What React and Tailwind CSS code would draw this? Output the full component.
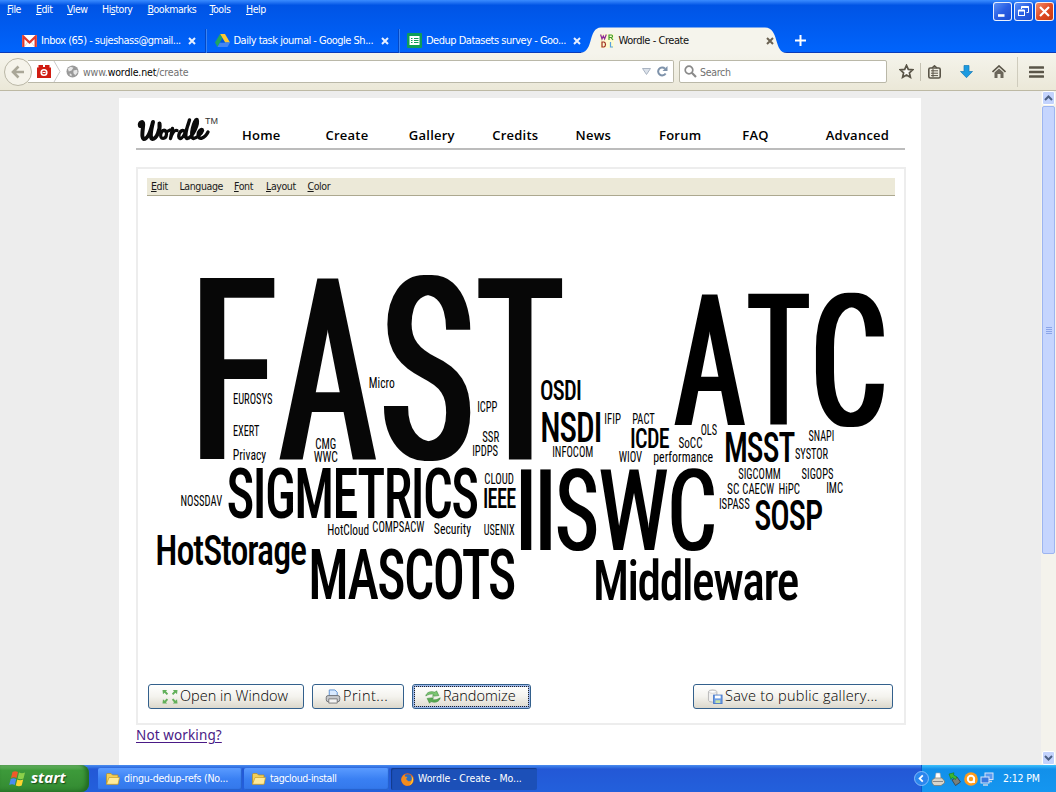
import React from "react";

const CLOUD_FONT = '"Roboto", "Liberation Sans", sans-serif';
const CAP = 0.711;

// [text, left, right, baseline, cap height]
const WORDS = [
  ["EUROSYS", 233.7, 272, 404, 10.4],
  ["EXERT", 233.7, 259, 436, 10.4],
  ["Privacy", 233.7, 266, 460, 10.4],
  ["CMG", 316, 335.6, 449.2, 10.4],
  ["WWC", 314, 337.5, 462.3, 10.4],
  ["Micro", 369.7, 394.2, 388.3, 10.4],
  ["ICPP", 478, 497, 412.3, 10.4],
  ["SSR", 482.7, 499, 441.8, 10.4],
  ["IPDPS", 473, 497.7, 455.6, 10.4],
  ["OSDI", 541, 580.3, 400, 19.6],
  ["NSDI", 542.3, 600, 441.5, 29.6],
  ["INFOCOM", 553, 592.5, 456.8, 10.4],
  ["IFIP", 605.2, 620.5, 424.4, 10.4],
  ["PACT", 633, 654.5, 424.4, 10.4],
  ["ICDE", 631.5, 669, 448, 19.8],
  ["OLS", 701.3, 716.7, 434.8, 10.4],
  ["SoCC", 679, 702, 448, 10.4],
  ["WIOV", 619, 642, 461.9, 10.4],
  ["performance", 654, 712.5, 461.9, 10.4],
  ["MSST", 726, 794.5, 461.7, 30],
  ["SNAPI", 809, 833.5, 441, 10.4],
  ["SYSTOR", 795.3, 828, 459, 10.4],
  ["SIGMETRICS", 228.3, 477.3, 517.7, 49.7],
  ["NOSSDAV", 181.3, 222, 506, 10.4],
  ["CLOUD", 485, 513.3, 484, 10.4],
  ["IEEE", 484.3, 515.8, 508.3, 19.6],
  ["HotCloud", 328, 368.5, 535.3, 10.4],
  ["COMPSACW", 373, 424.2, 532.3, 10.4],
  ["Security", 434.3, 471, 533.7, 10.4],
  ["USENIX", 484.4, 514.2, 535.3, 10.4],
  ["HotStorage", 157.7, 306, 565.4, 29.7],
  ["MASCOTS", 311.7, 514.5, 599.4, 50],
  ["Middleware", 596, 798, 600, 40],
  ["SIGCOMM", 738.7, 780, 479.4, 10.4],
  ["SIGOPS", 802, 833, 479.4, 10.4],
  ["SC", 727.5, 738.8, 493.7, 10.4],
  ["CAECW", 743, 774, 493.7, 10.4],
  ["HiPC", 779.3, 799.6, 493.5, 10.4],
  ["IMC", 827, 842.6, 493.3, 10.4],
  ["ISPASS", 719.8, 749.3, 508.7, 10.4],
  ["SOSP", 755.3, 822, 530.4, 30],
];

const BIG = [
  { base: 459.3, cap: 180.6, fill: "#070707", grow: 4, weight: 400, parts: [["F", 200, 275], ["A", 279.3, 376.7], ["S", 383.7, 470.7], ["T", 477.7, 562.7]] },
  { base: 424.7, cap: 130.4, fill: "#000", grow: 3, weight: 400, parts: [["A", 674.3, 745.3], ["T", 747.7, 809.3], ["C", 815.7, 884.2]] },
  { base: 550, cap: 80, fill: "#000", grow: 1, weight: 400, parts: [["I", 521, 531.8], ["I", 540.3, 551.2], ["S", 557.5, 596.3], ["W", 600, 667.5], ["C", 671.5, 714.2]] },
];

const ctx = document.createElement("canvas").getContext("2d");

// Places a run so that its ink spans exactly from left to right.
function fit(text, left, right, weight, tight) {
  ctx.font = `${weight} 200px ${CLOUD_FONT}`;
  try {
    ctx.fontStretch = "condensed";
    ctx.letterSpacing = tight ? "-6px" : "0px";
  } catch (e) { /* older engines */ }
  const m = ctx.measureText(text);
  const inkL = -m.actualBoundingBoxLeft;
  const k = (right - left) / (m.actualBoundingBoxRight - inkL);
  return { x: left - inkL * k, textLength: m.width * k };
}

function CloudText({ parts, base, cap, weight, fill, grow = 0, tight }) {
  return (
    <text
      y={base}
      fontSize={cap / CAP}
      fontWeight={weight}
      fill={fill}
      filter={grow ? `url(#grow${grow})` : undefined}
      style={{ fontStretch: "75%", letterSpacing: tight ? "-0.03em" : undefined }}
    >
      {parts.map(([t, l, r], i) => (
        <tspan key={i} lengthAdjust="spacingAndGlyphs" {...fit(t, l + grow, r - grow, weight, tight)}>{t}</tspan>
      ))}
    </text>
  );
}

const weightFor = (cap) => (cap < 15 ? 400 : 500);

function Cloud() {
  return (
    <svg className="block h-[480px] w-[748px] overflow-visible" viewBox="147 196 748 480" fontFamily={CLOUD_FONT}>
      <defs>
        {[1, 3, 4].map((n) => (
          <filter key={n} id={`grow${n}`} filterUnits="userSpaceOnUse" colorInterpolationFilters="sRGB" x="147" y="196" width="748" height="480">
            <feMorphology operator="dilate" radius={`${n} 0`} />
          </filter>
        ))}
      </defs>
      {BIG.map((w, i) => <CloudText key={i} {...w} />)}
      {WORDS.map(([t, l, r, b, c]) => (
        <CloudText key={t} parts={[[t, l, r]]} base={b} cap={c} weight={weightFor(c)} tight={c > 15} fill="#000" />
      ))}
    </svg>
  );
}

const U = ({ children }) => <span className="underline underline-offset-1">{children}</span>;

function Close({ dark }) {
  return (
    <svg className="h-[8px] w-[8px] shrink-0" viewBox="0 0 8 8">
      <path d="M1 1L7 7M7 1L1 7" stroke={dark ? "#6b6252" : "#e6efff"} strokeWidth="2" />
    </svg>
  );
}

const Gmail = () => (
  <svg className="h-[12px] w-[15px]" viewBox="0 0 15 12"><rect width="15" height="12" rx="1" fill="#fff" /><path d="M3 11L6 6.500M12 11L9 6.500" stroke="#ddd" /><path d="M1.300 12V1.500L7.500 7.500L13.700 1.500V12" fill="none" stroke="#e0392d" strokeWidth="2.300" /></svg>
);
const Drive = () => (
  <svg className="h-[13px] w-[15px]" viewBox="0 0 15 13"><path d="M5 0H10L15 8.500H10Z" fill="#fbc830" /><path d="M5 0L7.500 4.300L2.500 13L0 8.500Z" fill="#1fa463" /><path d="M5 8.500H15L12.500 13H2.500Z" fill="#4385f4" /><path d="M5 8.500H10L7.500 4.300Z" fill="#0358d8" /></svg>
);
const Sheets = () => (
  <svg className="h-[15px] w-[15px]" viewBox="0 0 15 15"><rect width="15" height="15" rx="1" fill="#0f9d58" /><rect x="2.500" y="3" width="10" height="9" fill="#fff" /><path d="M4 5.500H5.500M7 5.500H11.500M4 7.500H5.500M7 7.500H11.500M4 9.500H5.500M7 9.500H11.500" stroke="#0f9d58" /></svg>
);
const WordleIcon = () => (
  <svg className="h-[14px] w-[14px]" viewBox="0 0 14 14">
    <rect width="14" height="14" fill="#fdfbd0" />
    <g fill="none" strokeWidth="1.200"><path d="M.6 .5L2 5L3.300 2L4.600 5L6.300 .5" stroke="#8a2a9a" /><path d="M9 6V1H11.500Q12.500 1 12.500 2.200T11.500 3.500H9M11 3.500L13 6" stroke="#3f9a2a" /><path d="M2 8V13H4Q5.500 12.500 5.500 10.500T4 8Z" stroke="#a03020" /><path d="M10.500 8V13H13" stroke="#58a0e0" /></g>
  </svg>
);

function Tab({ icon, label, sep = true }) {
  return (
    <div className="flex h-[27px] w-[192.500px] shrink-0 items-center text-white">
      <span className="flex w-[15px] shrink-0 justify-center">{icon}</span>
      <span className="ml-[4px] w-[147px] text-[11px] leading-[15px] tracking-[-0.500px] whitespace-nowrap">{label}</span>
      <Close />
      {sep && <span className="ml-[10px] h-[24px] w-px bg-[#3b84f2] shadow-[-1px_0_0_#0448c4]" />}
    </div>
  );
}

function WinButton({ kind }) {
  return (
    <span className={"flex h-[19px] w-[19px] items-center justify-center rounded-[3px] border border-white/90 " + (kind === "x" ? "bg-linear-to-br from-[#f08a68] via-[#e04a22] to-[#c83a10]" : "bg-linear-to-br from-[#5b8ff5] via-[#2a5fe4] to-[#1c4cd0]")}>
      <svg className="h-[15px] w-[15px]" viewBox="0 0 15 15" fill="none" stroke="#fff">
        {kind === "min" && <path d="M3 11.500H9.500" strokeWidth="2.600" />}
        {kind === "max" && <g><path d="M5.500 5V2.500H12.500V8.500H10.500" /><path d="M5.500 3H12.500" strokeWidth="2" /><rect x="2.500" y="6.500" width="6" height="5" /><path d="M2.500 6.500H8.500" strokeWidth="2" /></g>}
        {kind === "x" && <path d="M3 3L12 12M12 3L3 12" strokeWidth="2.200" />}
      </svg>
    </span>
  );
}

function TitleBar() {
  return (
    <header className="flex h-[53px] shrink-0 flex-col border-b border-[#0a3ab8] bg-linear-to-b from-[#3a8cff] from-0% via-[#0054e5] via-10% to-[#0064fc] text-white">
      <div className="flex h-[26px] shrink-0 justify-between">
        <nav className="flex pt-[2px] pl-[7px] text-[10.500px] leading-[15px] tracking-[-0.450px]">
          <span className="w-[29px]"><U>F</U>ile</span>
          <span className="w-[31px]"><U>E</U>dit</span>
          <span className="w-[35px]"><U>V</U>iew</span>
          <span className="w-[45.500px]">Hi<U>s</U>tory</span>
          <span className="w-[62px]"><U>B</U>ookmarks</span>
          <span className="w-[36.500px]"><U>T</U>ools</span>
          <span><U>H</U>elp</span>
        </nav>
        <div className="flex gap-[2px] pt-[2px] pr-[2px]"><WinButton kind="min" /><WinButton kind="max" /><WinButton kind="x" /></div>
      </div>
      <div className="flex h-[27px] shrink-0 pt-px pl-[22px]">
        <Tab icon={<Gmail />} label="Inbox (65) - sujeshass@gmail..." />
        <Tab icon={<Drive />} label="Daily task journal - Google Sh..." />
        <Tab icon={<Sheets />} label="Dedup Datasets survey - Goo..." sep={false} />
        <div className="relative ml-[-19px] flex h-[27px] w-[212px] shrink-0 items-center pl-[19px] text-[#111]">
          <svg className="absolute top-0 left-0 h-[26px] w-[212px]" viewBox="0 0 212 26"><path d="M-2 26C14 26 6 1 20 .5H184C199 1 192 26 206 26Z" fill="#f5f4ec" /></svg>
          <span className="relative"><WordleIcon /></span>
          <span className="relative ml-[5px] w-[147px] text-[11px] leading-[15px] tracking-[-0.450px]">Wordle - Create</span>
          <span className="relative flex"><Close dark /></span>
        </div>
        <svg className="mt-[8px] ml-[2px] h-[11px] w-[11px]" viewBox="0 0 11 11"><path d="M5.500 0V11M0 5.500H11" stroke="#fff" strokeWidth="2" /></svg>
      </div>
    </header>
  );
}

function Toolbar() {
  return (
    <div className="flex h-[38px] shrink-0 items-center border-b border-[#bdb9a4] bg-linear-to-b from-[#f5f4ec] to-[#ebe8d8] text-[10.500px] tracking-[-0.150px] text-[#707070]">
      <span className="z-10 ml-[4px] flex h-[28px] w-[28px] shrink-0 items-center justify-center rounded-full border border-[#bab7a6] bg-[#f5f3ea]">
        <svg className="h-[14px] w-[14px]" viewBox="0 0 14 14" fill="none" stroke="#aaa798" strokeWidth="2.600"><path d="M13 7H3M7.500 1.500L2 7L7.500 12.500" /></svg>
      </span>
      <div className="ml-[-4px] flex h-[23px] w-[646px] items-center rounded-r-[2px] border border-l-0 border-[#bab8a8] bg-white">
        <svg className="ml-[9px] h-[13px] w-[14px]" viewBox="0 0 14 13"><path d="M1.500 0H6V2H8V0H12.500V2.500H14V13H0V2.500H1.500Z" fill="#d01c12" /><circle cx="7" cy="7.500" r="2.800" fill="none" stroke="#fff" strokeWidth="1.600" /><path d="M5.500 7.500H8.500" stroke="#fff" /></svg>
        <svg className="ml-[2px] h-[21px] w-[8px]" viewBox="0 0 8 21" fill="none" stroke="#c9c9c9"><path d="M1 0L7 10.500L1 21" /></svg>
        <svg className="ml-[5px] h-[13px] w-[13px]" viewBox="0 0 14 14"><circle cx="7" cy="7" r="6.500" fill="#999" /><path d="M2 4L5 2L8 3L6 6L3 7ZM8 6L12 5L12.500 8L10 11L8 9ZM4 9L6 10L6 12L4 11Z" fill="#e6e6e6" /></svg>
        <span className="mt-[2px] ml-[4px] flex-1">www.<span className="text-black">wordle.net</span>/create</span>
        <svg className="h-[7px] w-[9px]" viewBox="0 0 9 7"><path d="M.5 .5H8.500L4.500 6.500Z" fill="#dbe1ea" stroke="#aab4c2" /></svg>
        <svg className="mr-[5px] ml-[6px] h-[11px] w-[11px]" viewBox="0 0 11 11"><path d="M8.600 7.500A4 4 0 1 1 8 2.600" fill="none" stroke="#7e92aa" strokeWidth="2" /><path d="M10.500 0V5H5.500Z" fill="#7e92aa" /></svg>
      </div>
      <div className="ml-[5px] flex h-[23px] w-[208px] items-center rounded-[2px] border border-[#bab8a8] bg-white">
        <svg className="ml-[4px] h-[13px] w-[13px]" viewBox="0 0 13 13" fill="none" stroke="#8a8a8a"><circle cx="5" cy="5" r="3.800" strokeWidth="1.700" /><path d="M7.800 7.800L12 12" strokeWidth="2.200" /></svg>
        <span className="mt-[2px] ml-[3px] tracking-[-0.300px]">Search</span>
      </div>
      <svg className="ml-[12px] h-[15px] w-[15px]" viewBox="0 0 15 15" fill="#fbfaf5" stroke="#5a5548" strokeWidth="1.700"><path d="M7.500 1.300L9.300 5.400L13.800 5.800L10.400 8.800L11.400 13.300L7.500 11L3.600 13.300L4.600 8.800L1.200 5.800L5.700 5.400Z" /></svg>
      <span className="ml-[6px] h-[18px] w-px bg-[#c4c1b2]" />
      <svg className="ml-[7px] h-[14px] w-[13px]" viewBox="0 0 13 14" fill="none" stroke="#5a5548"><rect x=".8" y="3" width="11.400" height="10" rx="1.500" strokeWidth="1.600" /><path d="M4 3L6.500 .8L9 3" strokeWidth="1.500" /><path d="M3 5.800H10M3 8.200H10M3 10.600H10M5 4V12" /></svg>
      <svg className="ml-[19px] h-[13px] w-[13px]" viewBox="0 0 13 13"><path d="M4 .5H9V6.500H12.500L6.500 12.700L.5 6.500H4Z" fill="#1b9ae0" stroke="#147ab8" strokeWidth=".7" /></svg>
      <svg className="ml-[19px] h-[13px] w-[14px]" viewBox="0 0 14 13"><path d="M.5 7L7 1L13.500 7" fill="none" stroke="#5a5548" strokeWidth="1.700" /><path d="M2.500 7.500L7 3.500L11.500 7.500V13H8.500V9H5.500V13H2.500Z" fill="#6b665a" /></svg>
      <span className="ml-[11px] h-[30px] w-px bg-[#cfccbd]" />
      <svg className="ml-[11px] h-[12px] w-[15px]" viewBox="0 0 15 12"><path d="M.8 1.500H14.200M.8 6H14.200M.8 10.500H14.200" stroke="#5a5548" strokeWidth="2.300" strokeLinecap="round" /></svg>
    </div>
  );
}

const Logo = () => (
  <svg className="h-[34px] w-[82px] shrink-0" viewBox="0 0 82 34" fill="none" stroke="#0a0a0a" strokeLinecap="round" strokeLinejoin="round">
    <path d="M4 12C3 8.500 7.500 6 7.200 10.500C7 15 5 24 8 25C12 25 15 16 17 8C15 16 13.500 24.500 16.500 25C20.500 25 24.500 15.500 23.500 9.500" strokeWidth="4" />
    <path d="M28.500 16.500C24.500 16 23 24.500 27 24.500C31.500 24 31.500 16 28 16C29.500 18.500 32 17.500 34 16" strokeWidth="3.200" />
    <path d="M36.500 14.500L34.500 24.500C35.500 20 38 15.500 41 16.500" strokeWidth="3.400" />
    <path d="M48 17C44 14.500 41 23.500 44 24.500C47.500 25 51.500 13 53.500 6C51 13 48 24 51 24.500C56.500 24 63 10 61 5.500C58 4.500 53 24 57.500 24.500C60 24.500 65.500 20 66.500 16.500C66 13.500 61.500 17.500 62 21.500C62.500 26 68.500 25 72 18" strokeWidth="3.400" />
  </svg>
);

const NAV = [["Home", "w-[83.400px]"], ["Create", "w-[83.400px]"], ["Gallery", "w-[83.400px]"], ["Credits", "w-[83.400px]"], ["News", "w-[83.400px]"], ["Forum", "w-[83.400px]"], ["FAQ", "w-[83.400px]"], ["Advanced", ""]];

function Btn({ icon, label, cls, focus }) {
  return (
    <button className={"flex h-[25px] shrink-0 items-center rounded-[3px] border border-[#33608c] bg-linear-to-b from-white via-[#f4f3ee] to-[#dcd8cc] font-['Open_Sans',sans-serif] text-[14.500px] font-light whitespace-nowrap text-black " + (focus ? "shadow-[inset_0_0_0_2px_#9db8ea] outline-1 outline-offset-[-3px] outline-dotted outline-[#222] " : "") + cls}>
      {icon}
      <span className="mt-[-2px] ml-[2px]">{label}</span>
    </button>
  );
}

const Expand = () => (
  <svg className="h-[15px] w-[16px]" viewBox="0 0 16 16" fill="#62b05a"><path d="M0 1H5L3.700 2.500L6 5L4.500 6.300L2.200 4L.5 5.500ZM16 1H11L12.300 2.500L10 5L11.500 6.300L13.800 4L15.500 5.500ZM0 15.500H5L3.700 14L6 11.500L4.500 10.200L2.200 12.500L.5 11ZM16 15.500H11L12.300 14L10 11.500L11.500 10.200L13.800 12.500L15.500 11Z" /></svg>
);
const Printer = () => (
  <svg className="h-[15px] w-[16px]" viewBox="0 0 16 16"><path d="M4 8V1H10L12.500 3.500V8Z" fill="#d9eaff" stroke="#5d8fd0" /><rect x=".8" y="7" width="14.400" height="6.500" rx="2" fill="#c7c9cc" stroke="#6d7075" /><path d="M3.500 10.500H12.500V15H3.500Z" fill="#f4f4f4" stroke="#777" /></svg>
);
const Refresh = () => (
  <svg className="h-[14px] w-[16px]" viewBox="0 0 16 14" strokeWidth=".6" stroke="#3d8a3b"><path d="M.8 6C1.500 2 6 .8 10 2.300L11.500 .8L13.800 5.600L7.500 6.300L8.800 4.400C6 3.600 3.500 4.200 .8 6Z" fill="#7cc672" /><path d="M15.200 7.800C14.500 12 10 13 6 11.600L4.500 13.200L2.200 8.400L8.500 7.700L7.200 9.500C10 10.300 12.500 9.600 15.200 7.800Z" fill="#5aab52" /></svg>
);
const Save = () => (
  <svg className="h-[15px] w-[16px]" viewBox="0 0 16 16"><path d="M1 3Q1 1 5.500 1T10 3V12Q10 14 5.500 14T1 12Z" fill="#f0f0f0" stroke="#b5b5b5" /><ellipse cx="5.500" cy="3" rx="4" ry="1.500" fill="#fff" stroke="#c5c5c5" strokeWidth=".7" /><rect x="6.500" y="6.500" width="9" height="9" fill="#6f9fe6" stroke="#4878c8" /><rect x="8" y="7" width="6" height="3" fill="#fff" /><rect x="8.500" y="12" width="5" height="3" fill="#c8e4a8" /></svg>
);

function Page() {
  return (
    <main className="flex w-[802px] flex-col bg-white px-[17px]">
      <div className="flex h-[52px] w-[769px] items-end border-b-2 border-[#bcbcbc]">
        <div className="flex h-full w-[106px] items-start pt-[16px]">
          <Logo />
          <span className="mt-[2px] -ml-[13px] font-['Liberation_Sans',sans-serif] text-[9px] leading-[11px] text-[#333]">TM</span>
        </div>
        <nav className="flex pb-[3px] font-['Open_Sans',sans-serif] text-[13px] leading-[19px] font-semibold tracking-[0.250px] text-black">
          {NAV.map(([n, w]) => <span key={n} className={w}>{n}</span>)}
        </nav>
      </div>
      <section className="mt-[17px] flex h-[558px] w-[770px] flex-col border-2 border-[#ededed] px-[9px] pt-[9px]">
        <div className="flex h-[18px] shrink-0 border-b border-[#aca88f] bg-[#ece9d8] pl-[4px] text-[10.500px] leading-[17px] tracking-[-0.400px] text-[#1a1a1a]">
          <span className="w-[28.500px]"><U>E</U>dit</span>
          <span className="w-[54.500px]">Language</span>
          <span className="w-[32px]"><U>F</U>ont</span>
          <span className="w-[41.500px]"><U>L</U>ayout</span>
          <span><U>C</U>olor</span>
        </div>
        <Cloud />
        <div className="mt-[8px] flex pl-[1px]">
          <Btn icon={<Expand />} label="Open in Window" cls="w-[156px] pl-[13px]" />
          <Btn icon={<Printer />} label="Print..." cls="ml-[8px] w-[92px] pl-[12px] tracking-[0.500px]" />
          <Btn icon={<Refresh />} label="Randomize" focus cls="ml-[8px] w-[119px] pl-[12px]" />
          <Btn icon={<Save />} label="Save to public gallery..." cls="mr-[2px] ml-auto w-[200px] pl-[13px] tracking-[0.250px]" />
        </div>
      </section>
      <a className="self-start font-['Noto_Sans',sans-serif] text-[13.500px] leading-[20px] tracking-[0.120px] text-[#4a1a86] underline underline-offset-2">Not working?</a>
    </main>
  );
}

const ScrollBtn = ({ d }) => (
  <span className="flex h-[14px] w-[13px] shrink-0 items-center justify-center rounded-[2px] border border-white bg-[#c3d3fd]">
    <svg className="h-[6px] w-[9px]" viewBox="0 0 9 6"><path d={d} fill="none" stroke="#4d6185" strokeWidth="2" /></svg>
  </span>
);

const Folder = () => (
  <svg className="h-[12px] w-[14px] shrink-0" viewBox="0 0 14 12"><path d="M.5 1.500Q.5 .5 1.500 .5H5L6.500 2H12V11H.5Z" fill="#f2cf5a" stroke="#b98e1c" strokeWidth=".7" /><path d="M.5 11.300L3 4.500H13.500L12 11.300Z" fill="#ffeb9a" stroke="#c79d28" strokeWidth=".7" /></svg>
);
const Firefox = () => (
  <svg className="h-[13px] w-[13px] shrink-0" viewBox="0 0 13 13"><circle cx="6.500" cy="6.500" r="6.300" fill="#e8641b" /><circle cx="6.800" cy="5.300" r="4" fill="#2a6fc4" /><path d="M.3 6C1 4 2 2.500 3.500 1.500L4 3.500L6.500 4L5 6L7 8C9.500 9 11.500 7 11 4C13.500 7 12 12 7 12.800C3 13 .3 10 .3 6Z" fill="#f28c1e" /><path d="M10.500 3C13.500 6 12 11 8 12.500C11 10 11.500 7 10.500 3Z" fill="#ffd23a" /></svg>
);

function Task({ icon, label, active, w }) {
  return (
    <div className={"flex h-[22px] items-center rounded-[2px] text-[10.500px] whitespace-nowrap text-white " + w + (active ? " bg-[#1c50b8] pt-px pl-[10px] tracking-[-0.080px] shadow-[inset_1px_1px_1px_#123a8c]" : " bg-linear-to-b from-[#5a9bff] via-[#3a80f3] to-[#3377ea] pl-[8px] shadow-[inset_-1px_-1px_1px_#2560cc]")}>
      {icon}
      <span className="ml-[4px]">{label}</span>
    </div>
  );
}

function Taskbar() {
  return (
    <footer className="flex h-[27px] shrink-0 items-center bg-linear-to-b from-[#4a8df0] from-0% via-[#2358d6] via-15% to-[#2360dc]">
      <div className="flex h-[27px] w-[89px] shrink-0 items-center rounded-r-[8px] bg-linear-to-b from-[#6cb868] via-[#3d9a3a] via-20% to-[#338a32] pl-[9px] shadow-[inset_-3px_-1px_4px_#226a22]">
        <svg className="h-[17px] w-[18px]" viewBox="0 0 18 17"><path d="M3.500 2Q6 .3 9 2L7.500 8Q5 6.500 2 8Z" fill="#f0592a" /><path d="M10 2.500Q13 4 16 2.500L14.500 8.500Q11.500 10 8.600 8.500Z" fill="#8cd04a" /><path d="M1.700 9Q4.500 7.500 7.200 9L5.800 15Q3 13.500 .2 15Z" fill="#4a8cf0" /><path d="M8.300 9.600Q11 11 14.200 9.600L12.700 15.500Q10 17 6.800 15.500Z" fill="#fcd430" /></svg>
        <span className="mt-[-3px] ml-[4px] font-['Open_Sans',sans-serif] text-[15px] leading-[20px] font-bold text-white italic [text-shadow:1px_1px_1px_#1b4a1b]">start</span>
      </div>
      <div className="ml-[9px] flex flex-1 gap-[2px]">
        <Task icon={<Folder />} label="dingu-dedup-refs (No..." w="w-[144px] tracking-[-0.230px]" />
        <Task icon={<Folder />} label="tagcloud-install" w="w-[145px] tracking-[-0.400px]" />
        <Task icon={<Firefox />} label="Wordle - Create - Mo..." active w="w-[146px]" />
      </div>
      <div className="relative flex h-[27px] w-[135px] items-center bg-linear-to-b from-[#3cc0fa] from-0% via-[#1290ea] via-15% to-[#1496f0] pl-[10px] shadow-[inset_1px_0_0_#0a5ac8]">
        <svg className="absolute top-[6px] left-[-7px] h-[15px] w-[15px]" viewBox="0 0 15 15"><circle cx="7.500" cy="7.500" r="7" fill="#2a86ee" stroke="#9ccaff" strokeWidth=".8" /><path d="M8.800 4.300L5.600 7.500L8.800 10.700" fill="none" stroke="#fff" strokeWidth="1.800" /></svg>
        <svg className="h-[14px] w-[14px]" viewBox="0 0 14 14"><path d="M4 7L5 1H9L10 7Z" fill="#fff" stroke="#aaa" strokeWidth=".6" /><path d="M1 8L4 6H11L13.500 9V11L10 13.500H3L1 11Z" fill="#d7d5cb" stroke="#77756c" strokeWidth=".7" /><path d="M2 9.500H12" stroke="#888" /></svg>
        <svg className="ml-[3px] h-[14px] w-[13px]" viewBox="0 0 13 14"><path d="M4 8L9 5L12.500 10L7.500 13.500Z" fill="#77807c" stroke="#333" strokeWidth=".7" /><path d="M1 2L6 .8L5.500 3L9 5L7.500 7.500L4.200 5.500L3 7.500Z" fill="#3cb832" stroke="#1a7a18" strokeWidth=".6" /></svg>
        <svg className="ml-[3px] h-[14px] w-[14px]" viewBox="0 0 14 14"><circle cx="7" cy="7" r="6.800" fill="#ff9c1a" /><circle cx="7" cy="7" r="3.200" fill="none" stroke="#fff" strokeWidth="2" /><path d="M10 7V11" stroke="#fff" strokeWidth="1.800" /></svg>
        <svg className="ml-[2px] h-[14px] w-[14px]" viewBox="0 0 14 14"><rect x="5" y="1" width="8" height="6.500" fill="#5a9af0" stroke="#d8e4f8" /><rect x="1" y="5" width="8" height="6" fill="#3a7ae0" stroke="#d8e4f8" /><path d="M3 13H8M9 9.500H12" stroke="#c8d4e8" strokeWidth="1.400" /></svg>
        <span className="ml-[9px] text-[10.500px] tracking-[-0.200px] whitespace-nowrap text-white">2:12 PM</span>
      </div>
    </footer>
  );
}

export default function App() {
  return (
    <div className="flex h-[792px] w-[1056px] flex-col overflow-hidden bg-[#ededed] font-['DejaVu_Sans_Condensed','DejaVu_Sans',sans-serif]">
      <TitleBar />
      <Toolbar />
      <div className="flex h-[674px] shrink-0 justify-between">
        <div className="flex h-full pt-[7px] pl-[119px]"><Page /></div>
        <div className="flex h-full w-[15px] shrink-0 flex-col items-center justify-between bg-[#f4f3ec]">
          <ScrollBtn d="M1 5L4.500 1.500L8 5" />
          <div className="mt-[1px] flex h-[448px] w-[13px] shrink-0 flex-col items-center justify-center gap-px rounded-[2px] border border-[#9db5f0] bg-[#c5d5fe]">
            <span className="h-px w-[6px] bg-[#8ba5e8]" /><span className="h-px w-[6px] bg-[#8ba5e8]" /><span className="h-px w-[6px] bg-[#8ba5e8]" /><span className="h-px w-[6px] bg-[#8ba5e8]" />
          </div>
          <span className="flex-1" />
          <ScrollBtn d="M1 1L4.500 4.500L8 1" />
        </div>
      </div>
      <Taskbar />
    </div>
  );
}
